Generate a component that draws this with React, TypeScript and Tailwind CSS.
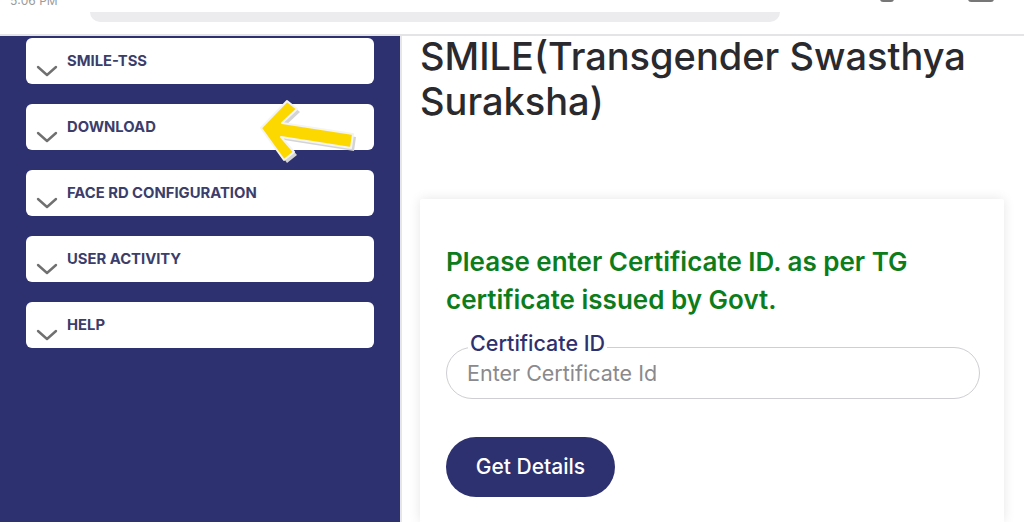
const menu = ["SMILE-TSS", "DOWNLOAD", "FACE RD CONFIGURATION", "USER ACTIVITY", "HELP"];

function Chevron() {
  return (
    <svg width="22" height="12" viewBox="0 0 22 12" className="mt-[13px] shrink-0">
      <path d="M2 2 L11 10 L20 2" fill="none" stroke="#707070" strokeWidth="2.4" strokeLinecap="round" strokeLinejoin="round" />
    </svg>
  );
}

function Arrow() {
  return (
    <svg width="110" height="70" viewBox="0 0 110 70" className="absolute left-[254px] top-[96px]">
      <g transform="translate(3 3)">
        <path
          d="M7 32 L33 5 L43 13 L28 27 L99 38 L97 52 L27 41 L40 56 L30 64 Z"
          fill="#d4d4d4"
        />
      </g>
      <path
        d="M7 32 L33 5 L43 13 L28 27 L99 38 L97 52 L27 41 L40 56 L30 64 Z"
        fill="#fcd800"
        stroke="#f4f4f4"
        strokeWidth="2"
        strokeLinejoin="round"
      />
    </svg>
  );
}

export default function App() {
  return (
    <div className="relative flex h-[522px] w-[1024px] flex-col overflow-hidden bg-white font-['Inter',sans-serif]">
      {/* browser chrome */}
      <div className="relative h-[36px] shrink-0 border-b-2 border-[#e4e4e6] bg-white">
        <div className="absolute left-[10px] top-[-8px] text-[12px] text-[#9a9a9a]">5:06 PM</div>
        <div className="absolute left-[880px] top-[-4px] flex gap-2">
          <div className="h-[6px] w-[14px] rounded-sm bg-[#777]" />
          <div className="h-[3px] w-[50px] bg-[#bbb]" />
          <div className="ml-2 h-[6px] w-[26px] rounded-sm bg-[#777]" />
        </div>
        <div className="mx-[90px] mt-[12px] h-[10px] w-[690px] rounded-b-[12px] bg-[#ececee]" />
      </div>

      <div className="flex min-h-0 flex-1">
        {/* sidebar */}
        <div className="flex w-[400px] shrink-0 flex-col gap-[20px] bg-[#2e3170] px-[26px] pt-[2px]">
          {menu.map((m) => (
            <div key={m} className="flex h-[46px] w-[348px] items-start gap-[9px] rounded-[6px] bg-white px-[10px] pt-[14px]">
              <Chevron />
              <span className="text-[14.8px] leading-[18px] font-bold text-[#3b3d6b]">{m}</span>
            </div>
          ))}
        </div>

        {/* content */}
        <div className="flex min-w-0 flex-1 flex-col border-l-2 border-[#e6e6e8] bg-white pl-[18px]">
          <h1 className="mt-[-2px] w-[580px] text-[38px] leading-[45px] font-medium text-[#2a2a2e]">
            SMILE(Transgender Swasthya Suraksha)
          </h1>
          <div className="mt-[75px] mr-[20px] flex flex-1 flex-col rounded-t-[2px] bg-white px-[26px] pt-[44px] shadow-[0_0_12px_rgba(0,0,0,0.10)]">
            <p className="text-[26px] leading-[38px] font-semibold text-[#0d7d1c]">
              Please enter Certificate ID. as per TG certificate issued by Govt.
            </p>
            <div className="relative mt-[28px]">
              <span className="absolute left-[22px] top-[-17px] bg-white px-[2px] text-[21.5px] leading-[26px] font-medium text-[#2e3170]">
                Certificate ID
              </span>
              <div className="flex h-[52px] w-[534px] items-center rounded-full border border-[#cfcfd3] px-[20px] text-[21.5px] text-[#8a8a8e]">
                Enter Certificate Id
              </div>
            </div>
            <button className="mt-[38px] h-[60px] w-[169px] rounded-full bg-[#2e3170] text-[21px] font-medium text-white">
              Get Details
            </button>
          </div>
        </div>
      </div>

      <Arrow />
    </div>
  );
}
